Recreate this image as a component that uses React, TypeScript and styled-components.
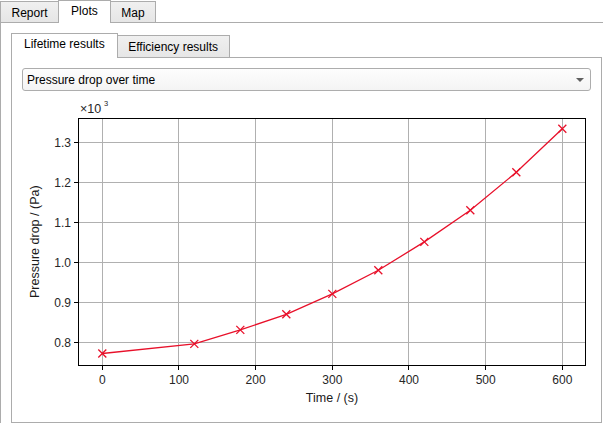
import React from 'react';
import styled, { createGlobalStyle } from 'styled-components';

const GlobalStyle = createGlobalStyle`
  html, body {
    margin: 0;
    padding: 0;
    background: #ffffff;
  }
  body {
    font-family: 'Liberation Sans', Arial, sans-serif;
    font-size: 12px;
    color: #000;
  }
`;

const Window = styled.div`
  width: 603px;
  height: 423px;
  overflow: hidden;
  background: #ffffff;
`;

const TabBar = styled.div<{ $height: number }>`
  display: flex;
  align-items: flex-end;
  height: ${(p) => p.$height}px;
  position: relative;
  z-index: 1;
`;

const Tab = styled.div<{ $active?: boolean; $height: number }>`
  box-sizing: border-box;
  height: ${(p) => (p.$active ? p.$height + 1 : p.$height)}px;
  margin-bottom: ${(p) => (p.$active ? -1 : 0)}px;
  margin-left: -1px;
  padding: ${(p) => (p.$active ? '3px 12px 0' : '4px 10.5px 0')};
  border: 1px solid #acacac;
  border-bottom: none;
  background: ${(p) =>
    p.$active ? '#ffffff' : 'linear-gradient(#f0f0f0, #e6e6e6)'};
  position: relative;
  z-index: ${(p) => (p.$active ? 2 : 1)};
  white-space: nowrap;
  &:first-child {
    margin-left: 0;
  }
`;

const Pane = styled.div<{ $width: number; $height: number }>`
  box-sizing: border-box;
  width: ${(p) => p.$width}px;
  height: ${(p) => p.$height}px;
  border: 1px solid #acacac;
  background: #ffffff;
  padding: 10px;
`;

const InnerWidget = styled.div`
  display: flex;
  flex-direction: column;
`;

const Combo = styled.div`
  box-sizing: border-box;
  height: 23px;
  display: flex;
  align-items: center;
  justify-content: space-between;
  padding: 0 6px 0 4px;
  border: 1px solid #adadad;
  border-radius: 3px;
  background: linear-gradient(#fdfdfd, #f4f4f4);
`;

const ComboArrow = styled.span`
  width: 0;
  height: 0;
  border-left: 4px solid transparent;
  border-right: 4px solid transparent;
  border-top: 4px solid #606060;
  margin-top: 1px;
`;

const PlotCanvas = styled.svg`
  display: block;
  font-family: 'Liberation Sans', Arial, sans-serif;
`;

const data: [number, number][] = [
  [0, 0.772],
  [120, 0.796],
  [180, 0.831],
  [240, 0.87],
  [300, 0.921],
  [360, 0.98],
  [420, 1.051],
  [480, 1.13],
  [540, 1.225],
  [600, 1.334],
];

const X = (t: number) => 80.3 + 0.7667 * t;
const Y = (v: number) => 251.3 - (v - 0.8) * 400;
const crisp = (n: number) => Math.floor(n) + 0.5;

const AX = { left: 56.5, right: 563.5, top: 27.5, bottom: 274.5 };
const xTicks = [0, 100, 200, 300, 400, 500, 600];
const yTicks = [0.8, 0.9, 1.0, 1.1, 1.2, 1.3];
const RED = '#e8102a';

const Plot = () => {
  const path = data.map(([t, v], i) => `${i ? 'L' : 'M'}${X(t)},${Y(v)}`).join(' ');
  return (
    <PlotCanvas width={569} height={320} viewBox='0 0 569 320'>
      <rect x={AX.left} y={AX.top} width={AX.right - AX.left} height={AX.bottom - AX.top} fill='#fff' />
      {xTicks.map((t) => (
        <line key={'gx' + t} x1={crisp(X(t))} x2={crisp(X(t))} y1={AX.top} y2={AX.bottom} stroke='#b0b0b0' strokeWidth={1} />
      ))}
      {yTicks.map((v) => (
        <line key={'gy' + v} x1={AX.left} x2={AX.right} y1={crisp(Y(v))} y2={crisp(Y(v))} stroke='#b0b0b0' strokeWidth={1} />
      ))}
      <path d={path} fill='none' stroke={RED} strokeWidth={1.3} />
      {data.map(([t, v]) => {
        const cx = X(t);
        const cy = Y(v);
        return (
          <path
            key={'m' + t}
            d={`M${cx - 4},${cy - 4} L${cx + 4},${cy + 4} M${cx - 4},${cy + 4} L${cx + 4},${cy - 4}`}
            stroke={RED}
            strokeWidth={1.3}
          />
        );
      })}
      <rect x={AX.left} y={AX.top} width={AX.right - AX.left} height={AX.bottom - AX.top} fill='none' stroke='#000' strokeWidth={1} />
      {xTicks.map((t) => (
        <g key={'tx' + t}>
          <line x1={crisp(X(t))} x2={crisp(X(t))} y1={AX.bottom} y2={AX.bottom + 4.5} stroke='#000' />
          <text x={X(t)} y={293} fontSize={12} fill='#262626' textAnchor='middle'>
            {t}
          </text>
        </g>
      ))}
      {yTicks.map((v) => (
        <g key={'ty' + v}>
          <line x1={AX.left - 4.5} x2={AX.left} y1={crisp(Y(v))} y2={crisp(Y(v))} stroke='#000' />
          <text x={49} y={Y(v) + 4.3} fontSize={12} fill='#262626' textAnchor='end'>
            {v.toFixed(1)}
          </text>
        </g>
      ))}
      <text x={58} y={21.5} fontSize={12.5} fill='#262626'>
        ×10
      </text>
      <text x={82} y={15} fontSize={7.5} fill='#262626'>
        3
      </text>
      <text x={310} y={310.5} fontSize={12.5} fill='#1a1a1a' textAnchor='middle'>
        Time / (s)
      </text>
      <text
        transform='translate(16.5,150.7) rotate(-90)'
        fontSize={12.5}
        fill='#1a1a1a'
        textAnchor='middle'
      >
        Pressure drop / (Pa)
      </text>
    </PlotCanvas>
  );
};

export default function App() {
  return (
    <Window>
      <GlobalStyle />
      <TabBar $height={22}>
        <Tab $height={21}>Report</Tab>
        <Tab $active $height={22}>Plots</Tab>
        <Tab $height={21}>Map</Tab>
      </TabBar>
      <Pane $width={613} $height={440}>
        <InnerWidget>
          <TabBar $height={24}>
            <Tab $active $height={24}>Lifetime results</Tab>
            <Tab $height={22}>Efficiency results</Tab>
          </TabBar>
          <Pane $width={591} $height={366}>
            <Combo>
              <span>Pressure drop over time</span>
              <ComboArrow />
            </Combo>
            <Plot />
          </Pane>
        </InnerWidget>
      </Pane>
    </Window>
  );
}
